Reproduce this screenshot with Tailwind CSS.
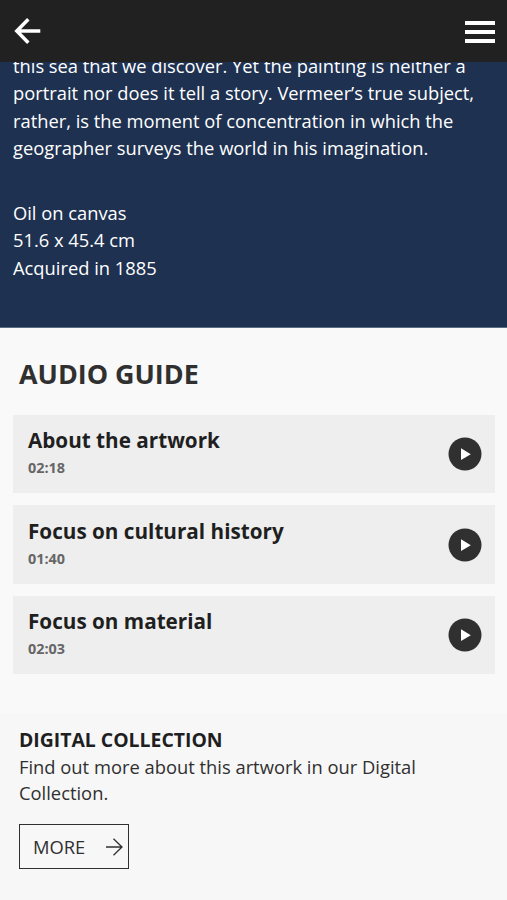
<!DOCTYPE html>
<html lang="en">
<head>
  <meta charset="UTF-8" />
  <meta name="viewport" content="width=device-width, initial-scale=1.0"/>
  <title>Audio Guide</title>
  <script src="https://cdn.jsdelivr.net/npm/@tailwindcss/browser@4"></script>
</head>
<body class="h-[900px] overflow-hidden bg-[#f9f9f9] text-[#1f1f1f] font-['Open_Sans',sans-serif]">

  <!-- Top bar -->
  <header class="relative z-10 h-[62px] bg-[#212121] text-white flex justify-between items-center pl-[14px] pr-3">
    <a href="#" aria-label="Back">
      <svg class="w-[28px] h-[28px]" viewBox="0 0 28 28" fill="none" stroke="currentColor" stroke-width="3.500">
        <path d="M26.300 14H3M14.300 2.300L2.800 14l11.500 11.700"/>
      </svg>
    </a>
    <button aria-label="Menu" class="flex flex-col gap-[5px] w-[30px] pt-px">
      <span class="h-1 w-full bg-white"></span>
      <span class="h-1 w-full bg-white"></span>
      <span class="h-1 w-full bg-white"></span>
    </button>
  </header>

  <main>
    <!-- Description, scrolled under the top bar -->
    <section class="-mt-[10px] h-[276px] bg-[#1e3150] border-b border-[#5b6a83] text-white px-[13px] text-[18.32px] leading-[27.4px] whitespace-nowrap">
      <p>this sea that we discover. Yet the painting is neither a<br>
        portrait nor does it tell a story. Vermeer’s true subject,<br>
        rather, is the moment of concentration in which the<br>
        geographer surveys the world in his imagination.</p>
      <p class="mt-[37.2px]">Oil on canvas<br>51.6 x 45.4 cm<br>Acquired in 1885</p>
    </section>

    <!-- Audio guide -->
    <section class="h-[385px] pt-7 pl-[13px] pr-3">
      <h2 class="pl-[6px] text-[26.9px] leading-9 font-bold text-[#303030]">AUDIO GUIDE</h2>
      <ul class="mt-[23px] space-y-3">
        <li class="h-[78px] bg-[#eee] pl-[15px] pr-[13px] flex justify-between items-center">
          <div>
            <h3 class="-mt-px text-[20.7px] leading-7 font-bold">About the artwork</h3>
            <p class="text-[14.4px] leading-[27px] font-bold text-[#666]">02:18</p>
          </div>
          <svg class="w-[34px] h-[34px]" viewBox="0 0 34 34">
            <circle cx="17" cy="17" r="16.500" fill="#303030"/>
            <path d="M13 11.300v11.800l9.800-5.900z" fill="#fff"/>
          </svg>
        </li>
        <li class="h-[79px] bg-[#eee] pl-[15px] pr-[13px] flex justify-between items-center">
          <div>
            <h3 class="-mt-px text-[20.7px] leading-7 font-bold">Focus on cultural history</h3>
            <p class="text-[14.4px] leading-[27px] font-bold text-[#666]">01:40</p>
          </div>
          <svg class="w-[34px] h-[34px]" viewBox="0 0 34 34">
            <circle cx="17" cy="17" r="16.500" fill="#303030"/>
            <path d="M13 11.300v11.800l9.800-5.900z" fill="#fff"/>
          </svg>
        </li>
        <li class="h-[78px] bg-[#eee] pl-[15px] pr-[13px] flex justify-between items-center">
          <div>
            <h3 class="-mt-px text-[20.7px] leading-7 font-bold">Focus on material</h3>
            <p class="text-[14.4px] leading-[27px] font-bold text-[#666]">02:03</p>
          </div>
          <svg class="w-[34px] h-[34px]" viewBox="0 0 34 34">
            <circle cx="17" cy="17" r="16.500" fill="#303030"/>
            <path d="M13 11.300v11.800l9.800-5.900z" fill="#fff"/>
          </svg>
        </li>
      </ul>
    </section>

    <!-- Digital collection -->
    <section class="h-[187px] bg-[#f7f7f7] pt-[13px] px-[19px]">
      <h2 class="text-[19.4px] leading-7 font-bold">DIGITAL COLLECTION</h2>
      <p class="text-[18.35px] leading-[26px] text-[#303030] whitespace-nowrap">Find out more about this artwork in our Digital<br>Collection.</p>
      <a href="#" class="mt-[18px] w-[110px] h-[45px] border border-[#303030] flex items-center justify-between pl-[13px] pr-[5px] text-[18.35px] text-[#303030]">
        MORE
        <svg class="w-[17px] h-[18px]" viewBox="0 0 17 18" fill="none" stroke="currentColor" stroke-width="1.300">
          <path d="M0 9h16M7.500 .7L16 9l-8.500 8.300"/>
        </svg>
      </a>
    </section>
  </main>
</body>
</html>
